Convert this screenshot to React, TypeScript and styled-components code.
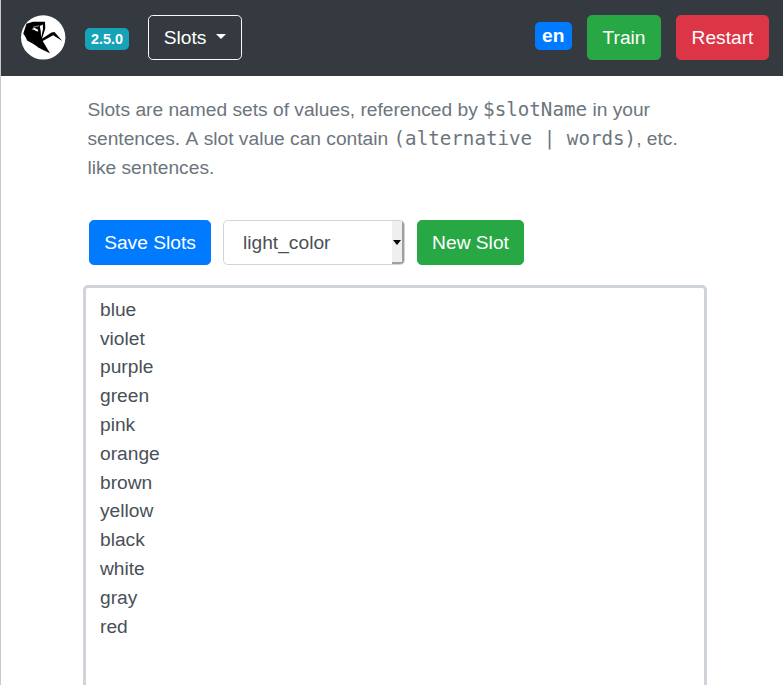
import React from "react";
import styled, { createGlobalStyle } from "styled-components";

const GlobalStyle = createGlobalStyle`
  *, *::before, *::after { box-sizing: border-box; }
  body {
    margin: 0;
    overflow: hidden;
    background: #fff;
    font-family: "Liberation Sans", Arial, sans-serif;
    font-size: 19.2px;
    line-height: 28.8px;
  }
`;

const Page = styled.div`
  height: 100vh;
  overflow: hidden;
  border-left: 1px solid #c9c9c9;
`;

const Navbar = styled.nav`
  display: flex;
  align-items: center;
  height: 76px;
  padding: 0 14px 2px 19px;
  background: #343a40;
`;

const Logo = styled.svg`
  display: block;
  width: 46px;
  height: 46px;
  margin-right: 19px;
`;

const Badge = styled.span<{ $large?: boolean }>`
  padding: ${(p) => (p.$large ? "0 7.5px" : "0 6px")};
  margin: ${(p) => (p.$large ? "0 15px 2px auto" : "3px 19px 0 0")};
  height: ${(p) => (p.$large ? 28 : 22)}px;
  line-height: ${(p) => (p.$large ? 28 : 22)}px;
  border-radius: 4.8px;
  background: ${(p) => (p.$large ? "#007bff" : "#17a2b8")};
  color: #fff;
  font-size: ${(p) => (p.$large ? 19.2 : 14.4)}px;
  font-weight: 700;
`;

const tones = { blue: "#007bff", green: "#28a745", red: "#dc3545", outline: "transparent" };

const Button = styled.button<{ $tone: keyof typeof tones; $width: number }>`
  display: flex;
  align-items: center;
  justify-content: center;
  flex: none;
  width: ${(p) => p.$width}px;
  height: 45px;
  padding: 1px 0 0;
  border: 1px solid ${(p) => (p.$tone === "outline" ? "#f8f9fa" : tones[p.$tone])};
  border-radius: 4.8px;
  background: ${(p) => tones[p.$tone]};
  color: #fff;
  font: inherit;

  ${Navbar} & {
    padding-top: 2px;
  }
`;

const Caret = styled.span`
  margin: -4px 0 0 10px;
  border: 5px solid transparent;
  border-top-color: #fff;
  border-bottom: 0;
`;

const NavActions = styled.div`
  display: flex;
  gap: 15px;
`;

const Content = styled.main`
  width: 624px;
  margin-left: 82px;
`;

const Intro = styled.p`
  margin: 0;
  padding: 20px 4px 0 4.4px;
  color: #6c757d;
`;

const Code = styled.span`
  font-family: "DejaVu Sans Mono", monospace;
`;

const Unkerned = styled.span`
  font-kerning: none;
`;

const Toolbar = styled.div`
  display: flex;
  gap: 12px;
  margin: 38px 0 20px 6px;
`;

const Select = styled.div`
  display: flex;
  justify-content: space-between;
  width: 182px;
  height: 45px;
  padding-left: 19px;
  border: 1px solid #ced4da;
  border-radius: 4.8px;
  color: #495057;
  line-height: 43px;
  overflow: hidden;
`;

const SelectArrow = styled.span`
  display: flex;
  align-items: center;
  justify-content: center;
  width: 12px;
  padding-top: 2px;
  border-right: 2px solid #a0a0a0;
  border-bottom: 2px solid #a0a0a0;
  background: #efefef;
`;

const TextArea = styled.textarea`
  display: block;
  width: 624px;
  height: 600px;
  padding: 7.5px 14px;
  border: 3px solid #ced4da;
  border-radius: 4.8px;
  background: #fff;
  color: #495057;
  font: inherit;
  resize: none;
  outline: none;
  overflow: hidden;
`;

const slots = ["blue", "violet", "purple", "green", "pink", "orange", "brown", "yellow", "black", "white", "gray", "red"];

export default function App() {
  return (
    <Page>
      <GlobalStyle />
      <Navbar>
        <Logo viewBox="0 0 46 46" aria-label="Logo">
          <circle cx="23.2" cy="23.4" r="22.2" fill="#fff" />
          <path
            d="M6.5 9.8L13 7.8L25 7.8L25.3 14.5L22 24.8L31.5 18.5L34.5 18L42.3 27L33.2 21.2L22.7 27L30 39.3L23.5 36.3L18.3 33.4L15 31L11.7 28.9L9.3 27.8L7.3 26.7L5.5 23L3.3 19.5Z"
            fill="#000"
          />
          <path d="M11.5 15.2L14.5 13.8L17.8 15.4L18.3 17.5L15.8 17L14 15.8Z" fill="#fff" />
          <path d="M19.8 12L22.8 10.5L23 15L21.2 23.5L20.7 17Z" fill="#fff" />
          <path d="M13 13.3L19 11.8" stroke="#bbb" strokeWidth="0.8" />
        </Logo>
        <Badge>2.5.0</Badge>
        <Button $tone="outline" $width={94}>
          Slots
          <Caret />
        </Button>
        <Badge $large>en</Badge>
        <NavActions>
          <Button $tone="green" $width={74}>Train</Button>
          <Button $tone="red" $width={93}>Restart</Button>
        </NavActions>
      </Navbar>
      <Content>
        <Intro>
          Slots are named sets of values, referenced by <Code>$slotName</Code> in your sentences.
          <Unkerned> A </Unkerned>slot value can contain <Code>(alternative | words)</Code>, etc. like sentences.
        </Intro>
        <Toolbar>
          <Button $tone="blue" $width={122}>Save Slots</Button>
          <Select>
            light_color
            <SelectArrow>
              <svg width="8" height="5" viewBox="0 0 8 5"><path d="M0 0H8L4 5Z" /></svg>
            </SelectArrow>
          </Select>
          <Button $tone="green" $width={107}>New Slot</Button>
        </Toolbar>
        <TextArea defaultValue={slots.join("\n")} spellCheck={false} />
      </Content>
    </Page>
  );
}
